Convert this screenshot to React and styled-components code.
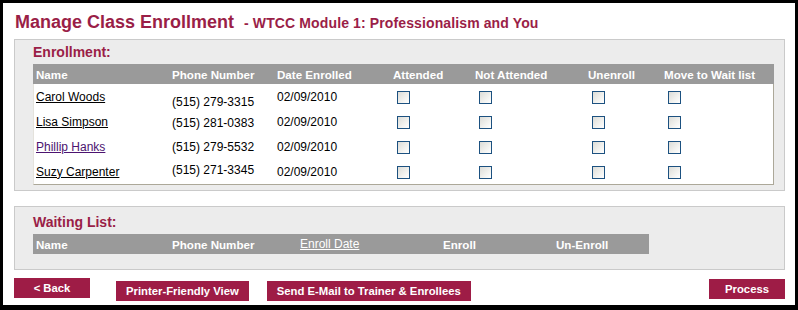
import styled, { createGlobalStyle } from "styled-components";

const GlobalStyle = createGlobalStyle`
  html, body {
    margin: 0;
    padding: 0;
    background: #000000;
  }
  * {
    box-sizing: border-box;
  }
`;

const enrolled = [
  { name: "Carol Woods", phone: "(515) 279-3315", date: "02/09/2010", dy: 5 },
  { name: "Lisa Simpson", phone: "(515) 281-0383", date: "02/09/2010", dy: 1 },
  { name: "Phillip Hanks", phone: "(515) 279-5532", date: "02/09/2010", dy: 0, visited: true },
  { name: "Suzy Carpenter", phone: "(515) 271-3345", date: "02/09/2010", dy: -2 },
];

const enrollCols = "136px 105px 116px 82px 113px 76px 1fr";
const waitCols = "136px 128px 143px 113px 1fr";

export default function App() {
  return (
    <>
      <GlobalStyle />
      <Frame>
        <TitleLine>
          <Title>Manage Class Enrollment</Title>
          <SubTitle>- WTCC Module 1: Professionalism and You</SubTitle>
        </TitleLine>

        <Panel $top={4} $bottom={5}>
          <PanelLabel>Enrollment:</PanelLabel>
          <HeadRow $cols={enrollCols}>
            <HeadCell>Name</HeadCell>
            <HeadCell>Phone Number</HeadCell>
            <HeadCell>Date Enrolled</HeadCell>
            <HeadCell>Attended</HeadCell>
            <HeadCell>Not Attended</HeadCell>
            <HeadCell>Unenroll</HeadCell>
            <HeadCell>Move to Wait list</HeadCell>
          </HeadRow>
          <TableBody>
            {enrolled.map((p) => (
              <Row key={p.name} $cols={enrollCols}>
                <Cell>
                  <NameLink href="#" $visited={p.visited}>
                    {p.name}
                  </NameLink>
                </Cell>
                <Cell $pad={2} $dy={p.dy}>
                  {p.phone}
                </Cell>
                <Cell>{p.date}</Cell>
                <BoxCell>
                  <Check type="checkbox" />
                </BoxCell>
                <BoxCell>
                  <Check type="checkbox" />
                </BoxCell>
                <BoxCell>
                  <Check type="checkbox" />
                </BoxCell>
                <BoxCell>
                  <Check type="checkbox" />
                </BoxCell>
              </Row>
            ))}
          </TableBody>
        </Panel>

        <Panel $top={7} $bottom={15} $gap={15}>
          <PanelLabel>Waiting List:</PanelLabel>
          <HeadRow $cols={waitCols} $width={616}>
            <HeadCell>Name</HeadCell>
            <HeadCell>Phone Number</HeadCell>
            <HeadCell>
              <HeadLink href="#">Enroll Date</HeadLink>
            </HeadCell>
            <HeadCell>Enroll</HeadCell>
            <HeadCell>Un-Enroll</HeadCell>
          </HeadRow>
        </Panel>

        <Actions>
          <Button $dy={0}>&lt; Back</Button>
          <Button $dy={3} $left={26}>
            Printer-Friendly View
          </Button>
          <Button $dy={3} $left={18}>
            Send E-Mail to Trainer &amp; Enrollees
          </Button>
          <Spacer />
          <Button $dy={1}>Process</Button>
        </Actions>
      </Frame>
    </>
  );
}

const Frame = styled.div`
  width: 798px;
  height: 310px;
  border-style: solid;
  border-color: #000000;
  border-width: 3px 3px 5px 3px;
  background: #ffffff;
  padding: 8px 10px 0 11px;
  font-family: "Liberation Sans", Arial, sans-serif;
  display: flex;
  flex-direction: column;
`;

const TitleLine = styled.div`
  display: flex;
  align-items: baseline;
  gap: 10px;
  line-height: 22px;
  padding-left: 1px;
`;

const Title = styled.h1`
  margin: 0;
  font-size: 18px;
  font-weight: 700;
  color: #9a1e47;
`;

const SubTitle = styled.span`
  font-size: 14px;
  font-weight: 700;
  letter-spacing: 0.12px;
  color: #9a1e47;
`;

const Panel = styled.div`
  margin-top: ${(p) => p.$gap || 5}px;
  background: #ececec;
  border: 1px solid #cacaca;
  padding: ${(p) => p.$top}px 10px ${(p) => p.$bottom}px 18px;
`;

const PanelLabel = styled.h2`
  margin: 0 0 4px 0;
  font-size: 14px;
  line-height: 16px;
  font-weight: 700;
  color: #9a1e47;
`;

const HeadRow = styled.div`
  display: grid;
  grid-template-columns: ${(p) => p.$cols};
  width: ${(p) => (p.$width ? `${p.$width}px` : "100%")};
  height: 20px;
  align-items: center;
  background: #9a9a9a;
  color: #ffffff;
  font-size: 11.6px;
  font-weight: 700;
`;

const HeadCell = styled.div`
  padding-left: 3px;
  white-space: nowrap;
`;

const HeadLink = styled.a`
  color: #ffffff;
  font-weight: 400;
  font-size: 12px;
  text-decoration: underline;
`;

const TableBody = styled.div`
  background: #ffffff;
  border-left: 1px solid #e4e2dc;
  border-right: 1px solid #aca899;
  border-bottom: 1px solid #aca899;
`;

const Row = styled.div`
  display: grid;
  grid-template-columns: ${(p) => p.$cols};
  height: 25px;
  align-items: center;
  font-size: 12px;
  color: #000000;
`;

const Cell = styled.div`
  padding-left: ${(p) => (p.$pad !== undefined ? p.$pad : 2)}px;
  white-space: nowrap;
  ${(p) =>
    p.$dy > 0
      ? `margin-top: ${p.$dy * 2}px;`
      : p.$dy < 0
      ? `margin-bottom: ${-p.$dy * 2}px;`
      : ""}
`;

const NameLink = styled.a`
  color: ${(p) => (p.$visited ? "#4c1470" : "#000000")};
  text-decoration: underline;
`;

const BoxCell = styled.div`
  display: flex;
  padding-left: 6px;
  padding-top: 2px;
`;

const Check = styled.input`
  appearance: none;
  -webkit-appearance: none;
  margin: 0;
  width: 13px;
  height: 13px;
  border: 1px solid #1c5180;
  background: linear-gradient(135deg, #dcdcd7 0%, #f2f2ef 60%, #ffffff 100%);
`;

const Actions = styled.div`
  display: flex;
  align-items: flex-start;
  margin-top: 8px;
`;

const Spacer = styled.div`
  flex: 1;
`;

const Button = styled.button`
  margin: ${(p) => p.$dy}px 0 0 ${(p) => p.$left || 0}px;
  min-width: 76px;
  height: 20px;
  padding: 0 10px;
  border: none;
  background: #9e1c46;
  color: #ffffff;
  font-family: "Liberation Sans", Arial, sans-serif;
  font-size: 11.3px;
  font-weight: 700;
  line-height: 20px;
  cursor: pointer;
  white-space: nowrap;
`;
